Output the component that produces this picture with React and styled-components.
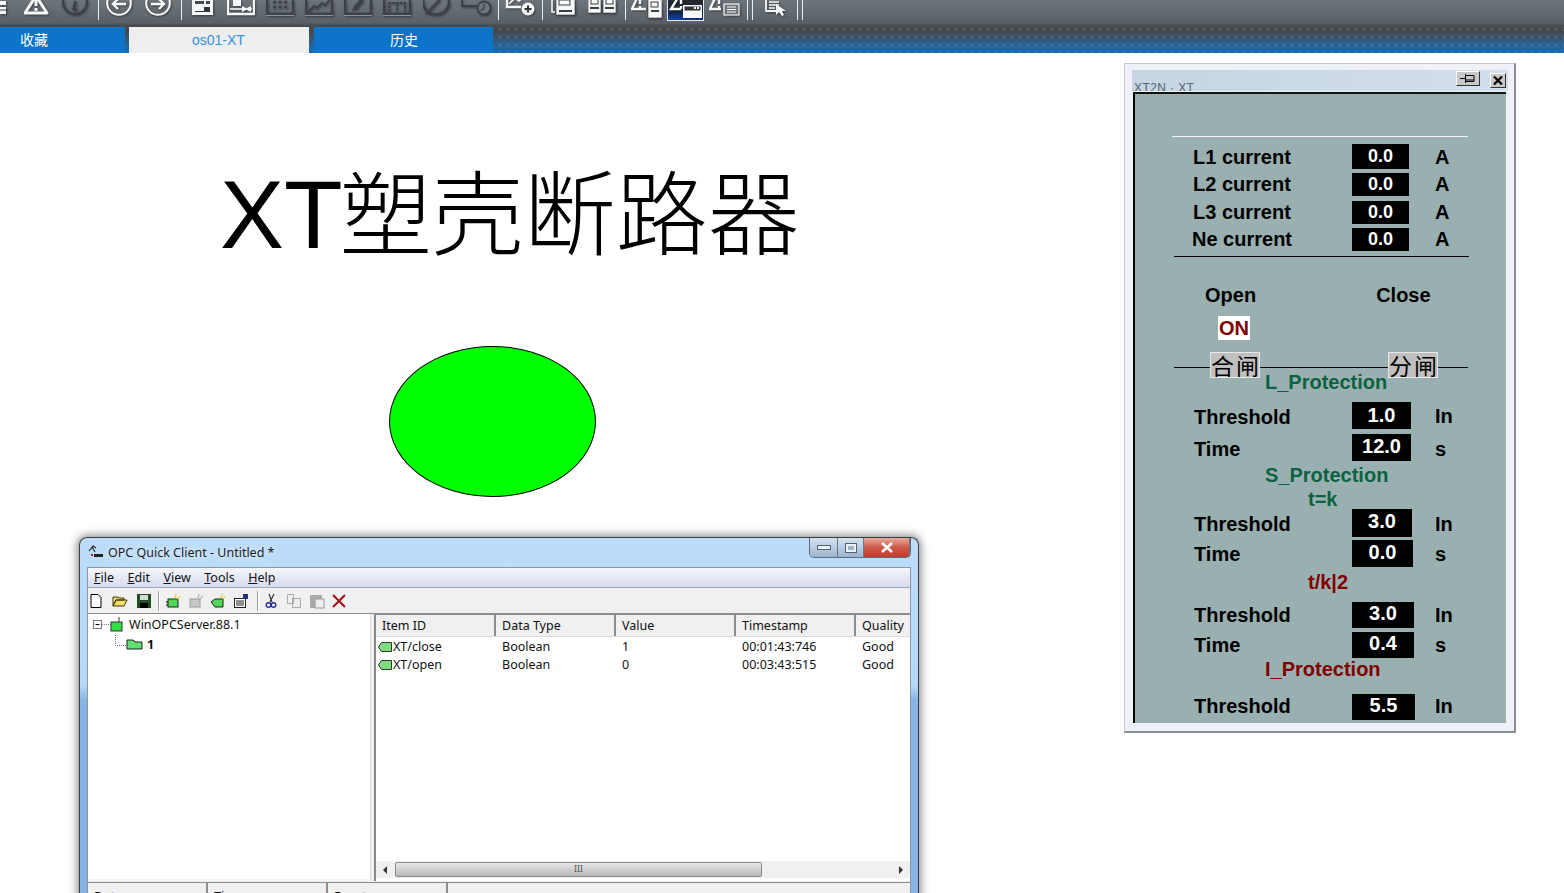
import React from 'react';
import styled, { createGlobalStyle } from 'styled-components';

const sans = '"Liberation Sans", Arial, "Noto Sans CJK SC", sans-serif';
const win = '"Noto Sans", "Liberation Sans", sans-serif';

const Global = createGlobalStyle`
  html, body { margin: 0; padding: 0; background: #fff; }
  body { width: 1564px; height: 893px; overflow: hidden; font-family: ${sans}; }
`;

const Page = styled.div`
  width: 1564px;
  height: 893px;
  display: flex;
  flex-direction: column;
  overflow: hidden;
`;

/* ---------- top toolbar ---------- */
const Toolbar = styled.div`
  height: 25px;
  flex: none;
  display: flex;
  align-items: flex-start;
  overflow: hidden;
  background: linear-gradient(#6d747a, #596066 92%, #4b4f54);
`;
const Tool = styled.svg`
  flex: none;
  display: block;
  width: ${p => p.$w}px;
  height: 25px;
  margin-left: ${p => p.$ml}px;
  filter: drop-shadow(1px 1px 1px rgba(20, 24, 28, 0.55));
`;
const Sep = styled.div`
  flex: none;
  width: 1px;
  height: 20px;
  margin-left: ${p => p.$ml}px;
  background: #e8ecef;
`;
const ActiveTool = styled.div`
  flex: none;
  width: 37px;
  height: 21px;
  margin-left: ${p => p.$ml}px;
  border: 1px solid #e4e8ec;
  border-top: 0;
  box-sizing: border-box;
  overflow: hidden;
  background: linear-gradient(#23272c, #14264a 60%, #0c3fa8);
`;

const W = '#f6f7f7';
const D = '#3c4146';
const Ico = ({ w, ml, children }) => (
  <Tool $w={w} $ml={ml} viewBox={`0 0 ${w} 25`} fill="none">{children}</Tool>
);
const Warn = ({ x = 0, s = 3 }) => (
  <g>
    <path d={`M${x + 12} -4 L${x + 23} 13 H${x + 1} Z`} stroke={W} strokeWidth={s} strokeLinejoin="round" />
    <path d={`M${x + 12} 0 V6`} stroke={W} strokeWidth="3" />
    <rect x={x + 10.5} y="8" width="3" height="3" fill={W} />
  </g>
);
const DimBox = () => (
  <g>
    <path d="M1 -4 H27 V14 H1 Z" stroke={D} strokeWidth="2.4" />
    <path d="M0 15.5 H28" stroke="#8d9499" strokeWidth="1" />
  </g>
);
const Page1 = ({ x, w, h = 15 }) => <rect x={x} y="-4" width={w} height={h + 4} fill={W} stroke="#30353a" strokeWidth="0.6" />;

const TopBar = () => (
  <Toolbar>
    <Ico w={7} ml={0}>
      <path d="M0 1 H6 V5 H0 M0 7 H6 V14 H0 Z" fill={W} />
      <path d="M0 10 H7" stroke={D} />
    </Ico>
    <Ico w={25} ml={17}><Warn /></Ico>
    <Ico w={26} ml={13}>
      <circle cx="13" cy="2" r="12" stroke={D} strokeWidth="2.4" />
      <path d="M13.5 1 L11.5 9 Q12 11 15 9" stroke={D} strokeWidth="2.4" />
      <circle cx="14.5" cy="-2" r="1.6" fill={D} />
    </Ico>
    <Sep $ml={10} />
    <Ico w={26} ml={7}>
      <circle cx="13" cy="3" r="11.8" stroke={W} strokeWidth="2" />
      <path d="M20 4 H7 M12 -1 L7 4 L12 9" stroke={W} strokeWidth="2.4" />
    </Ico>
    <Ico w={26} ml={13}>
      <circle cx="13" cy="3" r="11.8" stroke={W} strokeWidth="2" />
      <path d="M6 4 H19 M14 -1 L19 4 L14 9" stroke={W} strokeWidth="2.4" />
    </Ico>
    <Sep $ml={10} />
    <Ico w={21} ml={10}>
      <rect x="0" y="-4" width="21" height="19" fill={W} />
      <rect x="3" y="1" width="9" height="3" fill="#444a50" />
      <rect x="14" y="1" width="4" height="3" fill="#444a50" />
      <rect x="3" y="7" width="15" height="5" fill="#30353a" />
      <rect x="3" y="7" width="9" height="4" fill={W} />
    </Ico>
    <Ico w={28} ml={14}>
      <path d="M1 -4 V14 H27 V-4" stroke={W} strokeWidth="2.4" />
      <rect x="6" y="-4" width="8" height="10" fill={W} />
      <path d="M3 9 H25" stroke={W} strokeWidth="1.6" />
      <path d="M15 6 L21 9 L15 12 Z M24 6 L18 9 L24 12 Z" fill={W} />
    </Ico>
    <Ico w={28} ml={11}>
      <DimBox />
      <path d="M7 2 H10 M12.5 2 H15.5 M18 2 H21 M7 7 H10 M12.5 7 H15.5 M18 7 H21" stroke={D} strokeWidth="2.6" />
    </Ico>
    <Ico w={28} ml={11}>
      <DimBox />
      <path d="M3 12 L9 6 L12 8 L17 3 L20 5 L26 -2" stroke={D} strokeWidth="1.8" />
    </Ico>
    <Ico w={28} ml={11}>
      <DimBox />
      <path d="M8 11 L10 6 L17 -2 L20 1 L13 9 Z" fill={D} />
    </Ico>
    <Ico w={28} ml={11}>
      <DimBox />
      <path d="M6 12 V3 H22 V12 M14 3 V12" stroke={D} strokeWidth="1.8" strokeDasharray="3 1" />
    </Ico>
    <Ico w={27} ml={12}>
      <ellipse cx="13" cy="2" rx="13" ry="12.5" stroke={D} strokeWidth="2.6" />
      <path d="M3 14 L24 -8" stroke={D} strokeWidth="2.4" />
    </Ico>
    <Ico w={31} ml={11}>
      <path d="M1 -4 V6 H18 M1 -1 H10" stroke={D} strokeWidth="1.8" />
      <circle cx="23" cy="8" r="6.5" fill="#6d747a" stroke={D} strokeWidth="1.8" />
      <path d="M23 4 V8 L20 11" stroke={D} strokeWidth="1.4" />
    </Ico>
    <Sep $ml={6} />
    <Ico w={30} ml={6}>
      <path d="M2 -4 V7 H16" stroke={W} strokeWidth="2.4" />
      <path d="M4 4 L10 -2 L14 1 L20 -4" stroke={W} strokeWidth="1.6" />
      <circle cx="23" cy="9" r="6.5" fill={W} />
      <path d="M23 5.5 V12.5 M19.5 9 H26.5" stroke="#30353a" strokeWidth="2" />
    </Ico>
    <Sep $ml={7} />
    <Ico w={25} ml={8}>
      <path d="M1 -4 V12 H4" stroke={W} strokeWidth="1.6" />
      <Page1 x={5} w={19} />
      <rect x="8" y="0" width="11" height="5" stroke="#3a3f44" />
      <rect x="8" y="10" width="13" height="2" fill="#3a3f44" />
    </Ico>
    <Ico w={28} ml={12}>
      <Page1 x={0} w={13} h={13} />
      <Page1 x={15} w={13} h={13} />
      <rect x="3" y="-1" width="7" height="5" stroke="#3a3f44" />
      <rect x="18" y="-1" width="7" height="5" stroke="#3a3f44" />
      <rect x="2" y="7" width="9" height="2" fill="#3a3f44" />
      <rect x="17" y="7" width="9" height="2" fill="#3a3f44" />
    </Ico>
    <Sep $ml={9} />
    <Ico w={31} ml={5}>
      <path d="M7 -4 L1 9 H15" stroke={W} strokeWidth="2.4" />
      <path d="M9 -2 V4 M9 6 V9" stroke={W} strokeWidth="2.4" />
      <Page1 x={17} w={14} h={18} />
      <rect x="20" y="2" width="7" height="5" stroke="#3a3f44" />
      <rect x="20" y="10" width="8" height="2" fill="#3a3f44" />
    </Ico>
    <ActiveTool $ml={5}>
      <Tool $w={35} $ml={0} viewBox="0 0 35 25" fill="none">
        <path d="M11 -4 L3 9 H13" stroke={W} strokeWidth="2.4" />
        <path d="M13 -2 V4 M13 6 V9" stroke={W} strokeWidth="2.4" />
        <rect x="15" y="5" width="19" height="13" fill={W} />
        <rect x="16.5" y="6.5" width="16" height="4" fill="#30353a" />
        <rect x="26" y="7" width="2" height="2" fill={W} />
        <rect x="29" y="7" width="2" height="2" fill={W} />
      </Tool>
    </ActiveTool>
    <Ico w={31} ml={5}>
      <path d="M7 -4 L1 9 H12" stroke={W} strokeWidth="2.4" />
      <path d="M10 -2 V4 M10 6 V9" stroke={W} strokeWidth="2.4" />
      <rect x="15" y="4" width="15" height="11" fill="#6d747a" stroke={W} strokeWidth="1.2" />
      <path d="M18 7 H27 M18 9.5 H27 M18 12 H27" stroke={W} />
    </Ico>
    <Sep $ml={7} />
    <Sep $ml={4} />
    <Ico w={22} ml={12}>
      <path d="M1 -4 V11 H12" stroke={W} strokeWidth="1.8" />
      <path d="M4 -1 H14 M4 2 H14 M4 5 H14 M4 8 H10" stroke={W} strokeWidth="1.4" />
      <path d="M11 4 L11 15 L14 12 L17 16 L19 15 L17 11 L21 11 Z" fill={W} />
    </Ico>
    <Sep $ml={10} />
    <Sep $ml={4} />
  </Toolbar>
);

/* ---------- tabs ---------- */
const TabBar = styled.div`
  height: 28px;
  flex: none;
  display: flex;
  align-items: flex-end;
  background-color: #2b5f92;
  background-image:
    radial-gradient(circle at 4px 4px, rgba(255, 255, 255, 0.07) 1.6px, transparent 2.4px),
    radial-gradient(circle at 0 0, rgba(255, 255, 255, 0.05) 1.6px, transparent 2.4px),
    linear-gradient(#45484c 0, #45494e 25%, #2b5f92 70%, #106cb8 100%);
  background-size: 8px 8px, 8px 8px, 100% 100%;
`;
const Tab = styled.div`
  height: 26px;
  width: ${p => p.$w}px;
  margin-right: ${p => p.$mr}px;
  box-sizing: border-box;
  padding-left: ${p => p.$pad}px;
  flex: none;
  font-size: 14px;
  line-height: 27px;
  background: ${p => (p.$active ? '#eeeeee' : '#0c75c9')};
  color: ${p => (p.$active ? '#3392e0' : '#ffffff')};
`;

/* ---------- canvas ---------- */
const Canvas = styled.div`
  position: relative;
  flex: 1;
`;
const Title = styled.h1`
  position: absolute;
  left: 220px;
  top: 91px;
  margin: 0;
  font-family: ${sans};
  font-weight: 400;
  font-size: 96px;
  line-height: 128px;
  white-space: nowrap;
  color: #000;
`;
const TitleCjk = styled.span`
  font-family: "Noto Sans CJK SC", sans-serif;
  font-weight: 300;
  font-size: 92px;
  margin-left: -3px;
`;
const Lamp = styled.div`
  position: absolute;
  left: 389px;
  top: 293px;
  width: 207px;
  height: 151px;
  box-sizing: border-box;
  border: 1px solid #000;
  border-radius: 50%;
  background: #00ff00;
`;

/* ---------- faceplate panel ---------- */
const Panel = styled.div`
  position: absolute;
  left: 1124px;
  top: 10px;
  width: 392px;
  height: 670px;
  box-sizing: border-box;
  padding: 6px 6px 8px 7px;
  display: flex;
  flex-direction: column;
  background: #eef2f6;
  border: 1px solid #c6cacd;
  border-right: 2px solid #8b8e90;
  border-bottom: 2px solid #8b8e90;
`;
const PanelHead = styled.div`
  height: 21px;
  flex: none;
  display: flex;
  align-items: flex-start;
  overflow: hidden;
  background: linear-gradient(90deg, #c6d5e3, #d3dfea);
`;
const PanelName = styled.span`
  flex: 1;
  margin: 11px 0 0 2px;
  font-size: 12px;
  line-height: 15px;
  letter-spacing: 0.4px;
  color: #55616d;
`;
const HeadBtn = styled.button`
  width: ${p => p.$w}px;
  height: ${p => p.$h}px;
  margin: ${p => p.$mt}px ${p => p.$mr}px 0 0;
  padding: 0;
  flex: none;
  display: flex;
  align-items: center;
  justify-content: center;
  box-sizing: border-box;
  background: #c8c8c8;
  border: 1px solid #fff;
  border-right-color: #333;
  border-bottom-color: #333;
`;
const PanelBody = styled.div`
  flex: 1;
  min-height: 0;
  display: flex;
  flex-direction: column;
  overflow: hidden;
  margin: 1px 2px 0 1px;
  background: #9ab0b0;
  border-left: 2px solid #000;
  border-top: 2px solid #111;
`;
const Rule = styled.div`
  flex: none;
  height: 1px;
  width: ${p => p.$w}px;
  margin: ${p => p.$mt}px 0 0 ${p => p.$ml}px;
  background: ${p => p.$color};
`;
const Row = styled.div`
  flex: none;
  display: grid;
  grid-template-columns: 158px 83px auto;
  align-items: center;
  height: ${p => p.$h}px;
  margin-top: ${p => p.$mt}px;
  padding-left: 59px;
  font-weight: 700;
  font-size: 20px;
  color: #000;
`;
const RowLabel = styled.span`
  padding-top: 1px;
  margin-top: ${p => (p.$dy || 0) * 2}px;
  margin-left: ${p => p.$nudge || 0}px;
  white-space: nowrap;
`;
const Value = styled.div`
  width: ${p => p.$w}px;
  height: 100%;
  display: flex;
  justify-content: center;
  align-items: center;
  padding-bottom: ${p => p.$pb}px;
  box-sizing: border-box;
  background: #000;
  color: #fff;
  font-size: ${p => p.$fs}px;
`;
const Heading = styled.div`
  flex: none;
  height: ${p => p.$h}px;
  line-height: ${p => p.$h}px;
  margin-top: ${p => p.$mt}px;
  padding-left: ${p => p.$pl}px;
  font-weight: 700;
  font-size: 20px;
  white-space: nowrap;
  color: ${p => p.$color};
`;
const OpenClose = styled.div`
  flex: none;
  display: flex;
  height: 24px;
  margin-top: 26px;
  padding-left: 70px;
  gap: 120px;
  font-weight: 700;
  font-size: 20px;
  line-height: 24px;
`;
const OnFlag = styled.div`
  flex: none;
  width: 32px;
  height: 24px;
  margin: 9px 0 0 83px;
  background: #fff;
  color: #800000;
  font-weight: 700;
  font-size: 20px;
  line-height: 24px;
  text-align: center;
`;
const Switches = styled.div`
  flex: none;
  position: relative;
  display: flex;
  gap: 128px;
  height: 26px;
  margin-top: 12px;
  padding-left: 75px;
  &::before {
    content: '';
    position: absolute;
    left: 39px;
    top: 15px;
    width: 294px;
    height: 1px;
    background: #000;
  }
`;
const SwitchBtn = styled.button`
  position: relative;
  width: 50px;
  height: 26px;
  padding: 0;
  box-sizing: border-box;
  border: 1px solid #e8e8e8;
  background: #c0c0c0;
  font-family: "Noto Sans CJK SC", sans-serif;
  font-weight: 400;
  font-size: 23px;
  line-height: 24px;
  letter-spacing: 2px;
  white-space: nowrap;
  color: #000;
  overflow: hidden;
`;

const green = '#0a6242';
const red = '#800000';

const Metric = ({ label, value, unit, h, mt, w = 59, fs = 20, pb = 3, nudge, dy, unitDy }) => (
  <Row $h={h} $mt={mt}>
    <RowLabel $nudge={nudge} $dy={dy}>{label}</RowLabel>
    <Value $w={w} $fs={fs} $pb={pb}>{value}</Value>
    <RowLabel $dy={unitDy}>{unit}</RowLabel>
  </Row>
);

const FacePanel = () => (
  <Panel>
    <PanelHead>
      <PanelName>XT2N · XT</PanelName>
      <HeadBtn $w={24} $h={15} $mt={1} $mr={10} aria-label="pin">
        <svg width="18" height="11" viewBox="0 0 18 11" fill="none" stroke="#000">
          <path d="M1 5.5 H6 M6.5 1 V10 M7 2.5 H15 V8.5 H7 M7 7 H15" />
        </svg>
      </HeadBtn>
      <HeadBtn $w={16} $h={15} $mt={3} $mr={2} aria-label="close">
        <svg width="10" height="9" viewBox="0 0 10 9" stroke="#000" strokeWidth="2.2">
          <path d="M1 0.5 L9 8.5 M9 0.5 L1 8.5" />
        </svg>
      </HeadBtn>
    </PanelHead>
    <PanelBody>
      <Rule $w={296} $mt={42} $ml={37} $color="#f4f6f6" />
      <Metric label="L1 current" value="0.0" unit="A" h={23} mt={7} w={57} fs={18} pb={1} nudge={-1} dy={0.5} unitDy={0.5} />
      <Metric label="L2 current" value="0.0" unit="A" h={22} mt={6} w={57} fs={18} pb={1} nudge={-1} dy={-0.5} unitDy={-0.5} />
      <Metric label="L3 current" value="0.0" unit="A" h={23} mt={6} w={57} fs={18} pb={1} nudge={-1} dy={-1} unitDy={-1} />
      <Metric label="Ne current" value="0.0" unit="A" h={23} mt={4} w={57} fs={18} pb={1} nudge={-2} dy={-1} unitDy={-1} />
      <Rule $w={295} $mt={5} $ml={39} $color="#000" />
      <OpenClose>
        <span>Open</span>
        <span>Close</span>
      </OpenClose>
      <OnFlag>ON</OnFlag>
      <Switches>
        <SwitchBtn>合闸</SwitchBtn>
        <SwitchBtn>分闸</SwitchBtn>
      </Switches>
      <Heading $h={22} $mt={-7} $pl={130} $color={green}>L_Protection</Heading>
      <Metric label="Threshold" value="1.0" unit="In" h={27} mt={9} pb={1} dy={1} />
      <Metric label="Time" value="12.0" unit="s" h={26} mt={5} pb={2} dy={1.5} unitDy={1} />
      <Heading $h={22} $mt={4} $pl={130} $color={green}>S_Protection</Heading>
      <Heading $h={20} $mt={3} $pl={173} $color={green}>t=k</Heading>
      <Metric label="Threshold" value="3.0" unit="In" h={28} mt={0} w={60} dy={1} unitDy={1} />
      <Metric label="Time" value="0.0" unit="s" h={27} mt={3} w={61} />
      <Heading $h={20} $mt={5} $pl={173} $color={red}>t/k|2</Heading>
      <Metric label="Threshold" value="3.0" unit="In" h={26} mt={10} w={62} />
      <Metric label="Time" value="0.4" unit="s" h={26} mt={4} w={62} />
      <Heading $h={22} $mt={0} $pl={130} $color={red}>I_Protection</Heading>
      <Metric label="Threshold" value="5.5" unit="In" h={26} mt={14} w={63} dy={-1} unitDy={-1} />
    </PanelBody>
  </Panel>
);

/* ---------- OPC client window ---------- */
const OpcWindow = styled.div`
  position: absolute;
  left: 79px;
  top: 484px;
  width: 840px;
  height: 370px;
  box-sizing: border-box;
  padding: 0 7px;
  display: flex;
  flex-direction: column;
  font-family: ${win};
  font-size: 12.5px;
  color: #111;
  border: 1px solid #3a3d40;
  border-bottom: 0;
  border-radius: 8px 8px 0 0;
  background: linear-gradient(#bcdcfb 0, #b6d9fb 40%, #86b4e4 44%, #86b4e4 100%);
  box-shadow: 0 0 9px 2px rgba(0, 0, 0, 0.45);
`;
const Caption = styled.div`
  flex: none;
  height: 29px;
  display: flex;
  align-items: flex-start;
  font-size: 12.5px;
`;
const CaptionIcon = styled.svg`
  flex: none;
  width: 16px;
  height: 14px;
  margin: 7px 4px 0 1px;
`;
const CaptionText = styled.span`
  flex: 1;
  margin-top: 6px;
  line-height: 18px;
  color: #1c1c1c;
  text-shadow: 0 0 6px #fff;
`;
const Controls = styled.div`
  flex: none;
  display: flex;
  height: 20px;
  box-sizing: border-box;
  border: 1px solid #5f6b7a;
  border-top: 0;
  border-radius: 0 0 5px 5px;
  overflow: hidden;
`;
const Control = styled.div`
  width: ${p => p.$w}px;
  box-sizing: border-box;
  display: flex;
  align-items: center;
  justify-content: center;
  border-right: 1px solid #6c7886;
  background: ${p => (p.$close
    ? 'linear-gradient(#e8a89c, #cf5a48 50%, #c4392b)'
    : 'linear-gradient(#d6e2ef, #b8cde2 50%, #9cb4cc)')};
`;
const Client = styled.div`
  flex: 1;
  min-height: 0;
  display: flex;
  flex-direction: column;
  background: #f0f0f0;
  border: 1px solid #8f979f;
  border-bottom: 0;
`;
const MenuBar = styled.div`
  flex: none;
  height: 19px;
  display: flex;
  gap: 13.5px;
  padding-left: 6px;
  line-height: 20px;
  background: linear-gradient(#f6f7fb, #d6dbef);
  border-bottom: 1px solid #a5a8ad;
`;
const MenuKey = styled.span`
  text-decoration: underline;
`;
const OpcTools = styled.div`
  flex: none;
  height: 25px;
  display: flex;
  align-items: center;
  border-bottom: 1px solid #8d8d8d;
`;
const OpcTool = styled.svg`
  flex: none;
  display: block;
  width: 16px;
  height: 16px;
  margin-left: ${p => p.$ml}px;
`;
const OpcSep = styled.div`
  flex: none;
  width: 1px;
  height: 20px;
  margin-left: ${p => p.$ml}px;
  background: #a0a0a0;
  border-right: 1px solid #fff;
`;
const Split = styled.div`
  flex: none;
  height: 267px;
  display: flex;
  gap: 3px;
`;
const TreePane = styled.div`
  flex: none;
  width: 283px;
  box-sizing: border-box;
  background: #fff;
  border-right: 1px solid #dcdcdc;
  border-bottom: 2px solid #f4f4f4;
  padding: 0 0 0 5px;
`;
const TreeRow = styled.div`
  display: flex;
  align-items: center;
  height: ${p => p.$h}px;
  padding-left: ${p => p.$pl}px;
  gap: 4px;
  font-weight: ${p => (p.$bold ? 700 : 400)};
`;
const ListPane = styled.div`
  flex: 1;
  min-width: 0;
  display: flex;
  flex-direction: column;
  background: #fff;
  border-left: 2px solid #8a8a8a;
`;
const HeaderRow = styled.div`
  flex: none;
  display: flex;
  height: ${p => p.$h}px;
  background: #f0f0f0;
  border-top: 1px solid #8a8a8a;
  border-bottom: 1px solid #dadada;
`;
const HeaderCell = styled.div`
  flex: ${p => (p.$w ? `0 0 ${p.$w}px` : '1')};
  box-sizing: border-box;
  padding: ${p => p.$top || 0}px 0 0 6px;
  line-height: 22px;
  white-space: nowrap;
  overflow: hidden;
  border-right: ${p => (p.$w ? '2px solid #8d8d8d' : '0')};
`;
const ItemRow = styled.div`
  flex: none;
  display: flex;
  height: 18px;
  line-height: 18px;
  margin-top: ${p => p.$mt}px;
`;
const ItemCell = styled.div`
  flex: ${p => `0 0 ${p.$w}px`};
  display: flex;
  align-items: center;
  gap: 1px;
  box-sizing: border-box;
  padding-left: ${p => p.$pl}px;
  white-space: nowrap;
`;
const Tag = styled.svg`
  flex: none;
  width: 14px;
  height: 10px;
`;
const ScrollBar = styled.div`
  flex: none;
  margin-top: auto;
  height: 17px;
  margin-bottom: 3px;
  display: flex;
  align-items: center;
  background: #f0f0f0;
`;
const ScrollThumb = styled.div`
  width: 367px;
  height: 15px;
  margin: 0 0 0 8px;
  display: flex;
  justify-content: center;
  font-size: 9px;
  line-height: 12px;
  color: #555;
  border: 1px solid #8d8d8d;
  border-radius: 2px;
  box-sizing: border-box;
  background: linear-gradient(#e9e9e9, #d0d0d0 50%, #b8b8b8);
`;
const Arrow = styled.div`
  width: 0;
  height: 0;
  margin: ${p => (p.$right ? '0 7px 0 auto' : '0 0 0 7px')};
  border-top: 4px solid transparent;
  border-bottom: 4px solid transparent;
  ${p => (p.$right ? 'border-left: 4px solid #333;' : 'border-right: 4px solid #333;')}
`;
const LogHead = styled(HeaderRow)`
  margin-top: 1px;
`;

const columns = [
  ['Item ID', 120],
  ['Data Type', 120],
  ['Value', 120],
  ['Timestamp', 120],
  ['Quality', 0],
];
const items = [
  ['XT/close', 'Boolean', '1', '00:01:43:746', 'Good', 1],
  ['XT/open', 'Boolean', '0', '00:03:43:515', 'Good', 0],
];

const OpcClient = () => (
  <OpcWindow>
    <Caption>
      <CaptionIcon viewBox="0 0 16 14" fill="none">
        <path d="M1 6 L5 1 L8 3 M4 2 L7 7" stroke="#222" strokeWidth="1.2" />
        <path d="M6 9 H15 V12 H6 Z" fill="#222" />
        <path d="M3 10 H5" stroke="#a02020" strokeWidth="2" />
      </CaptionIcon>
      <CaptionText>OPC Quick Client - Untitled *</CaptionText>
      <Controls>
        <Control $w={28}>
          <svg width="14" height="6"><rect x="0.5" y="0.5" width="13" height="4" fill="#eef3f8" stroke="#55606c" /></svg>
        </Control>
        <Control $w={26}>
          <svg width="12" height="10"><rect x="0.5" y="0.5" width="11" height="9" fill="#eef3f8" stroke="#55606c" /><rect x="3" y="3" width="6" height="4" fill="#9cb4cc" /></svg>
        </Control>
        <Control $w={46} $close>
          <svg width="14" height="11" stroke="#fff" strokeWidth="2.6"><path d="M2 1 L12 10 M12 1 L2 10" /></svg>
        </Control>
      </Controls>
    </Caption>
    <Client>
      <MenuBar>
        <span><MenuKey>F</MenuKey>ile</span>
        <span><MenuKey>E</MenuKey>dit</span>
        <span><MenuKey>V</MenuKey>iew</span>
        <span><MenuKey>T</MenuKey>ools</span>
        <span><MenuKey>H</MenuKey>elp</span>
      </MenuBar>
      <OpcTools>
        <OpcTool $ml={0} viewBox="0 0 16 16"><path d="M3 1.5 H10 L13 4.5 V14.5 H3 Z" fill="#fff" stroke="#000" /></OpcTool>
        <OpcTool $ml={8} viewBox="0 0 16 16"><path d="M1 13 V4 H6 L7 5 H12 V7 H4 L1 13 L4 7 H15 L12 13 Z" fill="#f5dc6a" stroke="#3a3a00" /></OpcTool>
        <OpcTool $ml={8} viewBox="0 0 16 16"><path d="M1 1 H15 V15 H1 Z" fill="#1f4f1f" /><rect x="4" y="2" width="8" height="5" fill="#d8d8d8" /><rect x="4" y="10" width="8" height="5" fill="#000" /></OpcTool>
        <OpcSep $ml={6} />
        <OpcTool $ml={5} viewBox="0 0 16 16"><rect x="3" y="6" width="10" height="8" fill="#4fd85a" stroke="#222" /><path d="M11 1 L10 5 M15 3 L12 6" stroke="#e6d84a" strokeWidth="1.4" /><path d="M1 9 H3 M1 12 H3" stroke="#000" /></OpcTool>
        <OpcTool $ml={7} viewBox="0 0 16 16"><rect x="2" y="6" width="10" height="8" fill="#c8c8c8" stroke="#999" /><path d="M11 1 L10 5 M15 3 L12 6" stroke="#bbb" strokeWidth="1.4" /></OpcTool>
        <OpcTool $ml={6} viewBox="0 0 16 16"><path d="M1 9 L5 6 H13 V14 H5 Z" fill="#4fd85a" stroke="#222" /><path d="M12 1 L11 5 M15 3 L13 6" stroke="#e6d84a" strokeWidth="1.4" /></OpcTool>
        <OpcTool $ml={7} viewBox="0 0 16 16"><rect x="1.5" y="5.5" width="11" height="9" fill="#fff" stroke="#222" /><path d="M3 8 H11 M3 10 H11 M3 12 H11" stroke="#222" /><rect x="10" y="1" width="5" height="5" fill="#20307a" /></OpcTool>
        <OpcSep $ml={8} />
        <OpcTool $ml={4} viewBox="0 0 16 16"><path d="M6 1 L9 9 M11 1 L7 9" stroke="#333" strokeWidth="1.2" /><circle cx="5.5" cy="12" r="2.3" fill="none" stroke="#2a2fa0" strokeWidth="1.4" /><circle cx="10.5" cy="12" r="2.3" fill="none" stroke="#2a2fa0" strokeWidth="1.4" /></OpcTool>
        <OpcTool $ml={7} viewBox="0 0 16 16"><path d="M1.5 1.5 H7.5 V10.5 H1.5 Z M6.5 5.5 H14.5 V14.5 H6.5 Z" fill="#eee" stroke="#aaa" /></OpcTool>
        <OpcTool $ml={7} viewBox="0 0 16 16"><rect x="1" y="2" width="12" height="13" rx="1" fill="#aaa" /><rect x="6" y="6" width="9" height="9" fill="#eee" stroke="#999" /></OpcTool>
        <OpcTool $ml={6} viewBox="0 0 16 16"><path d="M2 2 L14 14 M14 2 L2 14" stroke="#a01010" strokeWidth="2" /></OpcTool>
      </OpcTools>
      <Split>
        <TreePane>
          <TreeRow $h={20} $pl={0}>
            <svg width="32" height="16" viewBox="0 0 32 16">
              <rect x="0.5" y="4.5" width="8" height="8" fill="#fff" stroke="#777" />
              <path d="M2.5 8.5 H6.5" stroke="#000" />
              <path d="M9 8.5 H18" stroke="#777" strokeDasharray="1 1" />
              <rect x="18" y="6" width="11" height="9" fill="#2fe040" stroke="#333" />
              <path d="M26 1 V6" stroke="#333" />
            </svg>
            <span>WinOPCServer.88.1</span>
          </TreeRow>
          <TreeRow $h={20} $pl={22} $bold>
            <svg width="28" height="18" viewBox="0 0 28 18">
              <path d="M0.5 0 V10.5 H12" stroke="#777" strokeDasharray="1 1" fill="none" />
              <path d="M12 14 V5 H18 L20 7 H27 V14 Z" fill="#5fe070" stroke="#222" />
            </svg>
            <span>1</span>
          </TreeRow>
        </TreePane>
        <ListPane>
          <HeaderRow $h={21}>
            {columns.map(([name, w]) => (
              <HeaderCell key={name} $w={w}>{name}</HeaderCell>
            ))}
          </HeaderRow>
          {items.map(([id, type, value, time, quality, mt]) => (
            <ItemRow key={id} $mt={mt}>
              <ItemCell $w={120} $pl={2}>
                <Tag viewBox="0 0 14 10"><path d="M0.5 5 L3.5 0.5 H13.5 V9.5 H3.5 Z" fill="#7edc7e" stroke="#333" /></Tag>
                {id}
              </ItemCell>
              <ItemCell $w={120} $pl={6}>{type}</ItemCell>
              <ItemCell $w={120} $pl={6}>{value}</ItemCell>
              <ItemCell $w={120} $pl={6}>{time}</ItemCell>
              <ItemCell $w={54} $pl={6}>{quality}</ItemCell>
            </ItemRow>
          ))}
          <ScrollBar>
            <Arrow />
            <ScrollThumb>III</ScrollThumb>
            <Arrow $right />
          </ScrollBar>
        </ListPane>
      </Split>
      <LogHead $h={22}>
        <HeaderCell $w={120} $top={3}>Date</HeaderCell>
        <HeaderCell $w={120} $top={3}>Time</HeaderCell>
        <HeaderCell $w={120} $top={3}>Event</HeaderCell>
        <HeaderCell />
      </LogHead>
    </Client>
  </OpcWindow>
);

export default function App() {
  return (
    <Page>
      <Global />
      <TopBar />
      <TabBar>
        <Tab $w={125} $mr={4} $pad={20}>收藏</Tab>
        <Tab $w={180} $mr={5} $pad={63} $active>os01-XT</Tab>
        <Tab $w={179} $mr={0} $pad={76}>历史</Tab>
      </TabBar>
      <Canvas>
        <Title>XT<TitleCjk>塑壳断路器</TitleCjk></Title>
        <Lamp />
        <OpcClient />
        <FacePanel />
      </Canvas>
    </Page>
  );
}
